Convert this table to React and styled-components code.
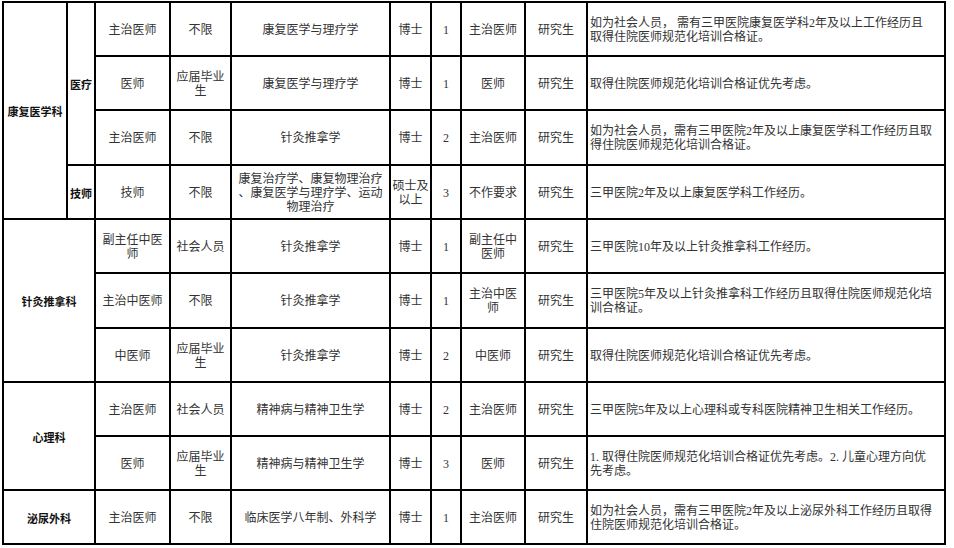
import React from 'react';
import styled, { createGlobalStyle } from 'styled-components';

const Global = createGlobalStyle`
  html, body { margin: 0; padding: 0; background: #fff; }
  body { font-family: "Liberation Serif", "Noto Sans CJK SC", serif; }
`;

const Sheet = styled.div`
  display: grid;
  grid-template-columns: 62px 26px 73px 59px 157px 39px 28px 62px 60px 356px;
  grid-template-rows: 52px 52px 53px 52px 52px 53px 52px 52px 52px 52px;
  gap: 2px;
  padding: 2px;
  background: #000;
  width: max-content;
  margin: 1px 0 0 2px;
`;

const Cell = styled.div`
  grid-column: span ${(p) => p.$cols || 1};
  grid-row: span ${(p) => p.$rows || 1};
  background: #fff;
  display: flex;
  align-items: center;
  justify-content: center;
  text-align: center;
  padding-top: 1px;
  font-family: "Liberation Serif", "Noto Sans CJK SC", serif;
  font-size: 12px;
  line-height: 14px;
  color: #333;
  overflow: hidden;
  white-space: nowrap;
`;

const Dept = styled(Cell)`
  font-family: "Noto Sans CJK SC", sans-serif;
  font-weight: 700;
  font-size: 11px;
  color: #111;
`;

const Note = styled(Cell)`
  justify-content: flex-start;
  text-align: left;
  padding-left: 2px;
`;

const lines = (t) =>
  t.split('\n').map((s, i, a) => (
    <React.Fragment key={i}>
      {s}
      {i < a.length - 1 && <br />}
    </React.Fragment>
  ));

const rows = [
  {
    dept: { text: '康复医学科', rows: 4, cols: 1 },
    sub: { text: '医疗', rows: 3 },
    v: ['主治医师', '不限', '康复医学与理疗学', '博士', '1', '主治医师', '研究生'],
    note: '如为社会人员， 需有三甲医院康复医学科2年及以上工作经历且\n取得住院医师规范化培训合格证。',
  },
  {
    v: ['医师', '应届毕业\n生', '康复医学与理疗学', '博士', '1', '医师', '研究生'],
    note: '取得住院医师规范化培训合格证优先考虑。',
  },
  {
    v: ['主治医师', '不限', '针灸推拿学', '博士', '2', '主治医师', '研究生'],
    note: '如为社会人员，需有三甲医院2年及以上康复医学科工作经历且取\n得住院医师规范化培训合格证。',
  },
  {
    sub: { text: '技师', rows: 1 },
    v: ['技师', '不限', '康复治疗学、康复物理治疗\n、康复医学与理疗学、运动\n物理治疗', '硕士及\n以上', '3', '不作要求', '研究生'],
    note: '三甲医院2年及以上康复医学科工作经历。',
  },
  {
    dept: { text: '针灸推拿科', rows: 3, cols: 2 },
    v: ['副主任中医\n师', '社会人员', '针灸推拿学', '博士', '1', '副主任中\n医师', '研究生'],
    note: '三甲医院10年及以上针灸推拿科工作经历。',
  },
  {
    v: ['主治中医师', '不限', '针灸推拿学', '博士', '1', '主治中医\n师', '研究生'],
    note: '三甲医院5年及以上针灸推拿科工作经历且取得住院医师规范化培\n训合格证。',
  },
  {
    v: ['中医师', '应届毕业\n生', '针灸推拿学', '博士', '2', '中医师', '研究生'],
    note: '取得住院医师规范化培训合格证优先考虑。',
  },
  {
    dept: { text: '心理科', rows: 2, cols: 2 },
    v: ['主治医师', '社会人员', '精神病与精神卫生学', '博士', '2', '主治医师', '研究生'],
    note: '三甲医院5年及以上心理科或专科医院精神卫生相关工作经历。',
  },
  {
    v: ['医师', '应届毕业\n生', '精神病与精神卫生学', '博士', '3', '医师', '研究生'],
    note: '1. 取得住院医师规范化培训合格证优先考虑。2. 儿童心理方向优\n先考虑。',
  },
  {
    dept: { text: '泌尿外科', rows: 1, cols: 2 },
    v: ['主治医师', '不限', '临床医学八年制、外科学', '博士', '1', '主治医师', '研究生'],
    note: '如为社会人员，需有三甲医院2年及以上泌尿外科工作经历且取得\n住院医师规范化培训合格证。',
  },
];

export default function App() {
  return (
    <>
      <Global />
      <Sheet>
        {rows.map((r, ri) => (
          <React.Fragment key={ri}>
            {r.dept && (
              <Dept $rows={r.dept.rows} $cols={r.dept.cols}>
                {r.dept.text}
              </Dept>
            )}
            {r.sub && <Dept $rows={r.sub.rows}>{r.sub.text}</Dept>}
            {r.v.map((t, ci) => (
              <Cell key={ci}>{lines(t)}</Cell>
            ))}
            <Note>{lines(r.note)}</Note>
          </React.Fragment>
        ))}
      </Sheet>
    </>
  );
}
